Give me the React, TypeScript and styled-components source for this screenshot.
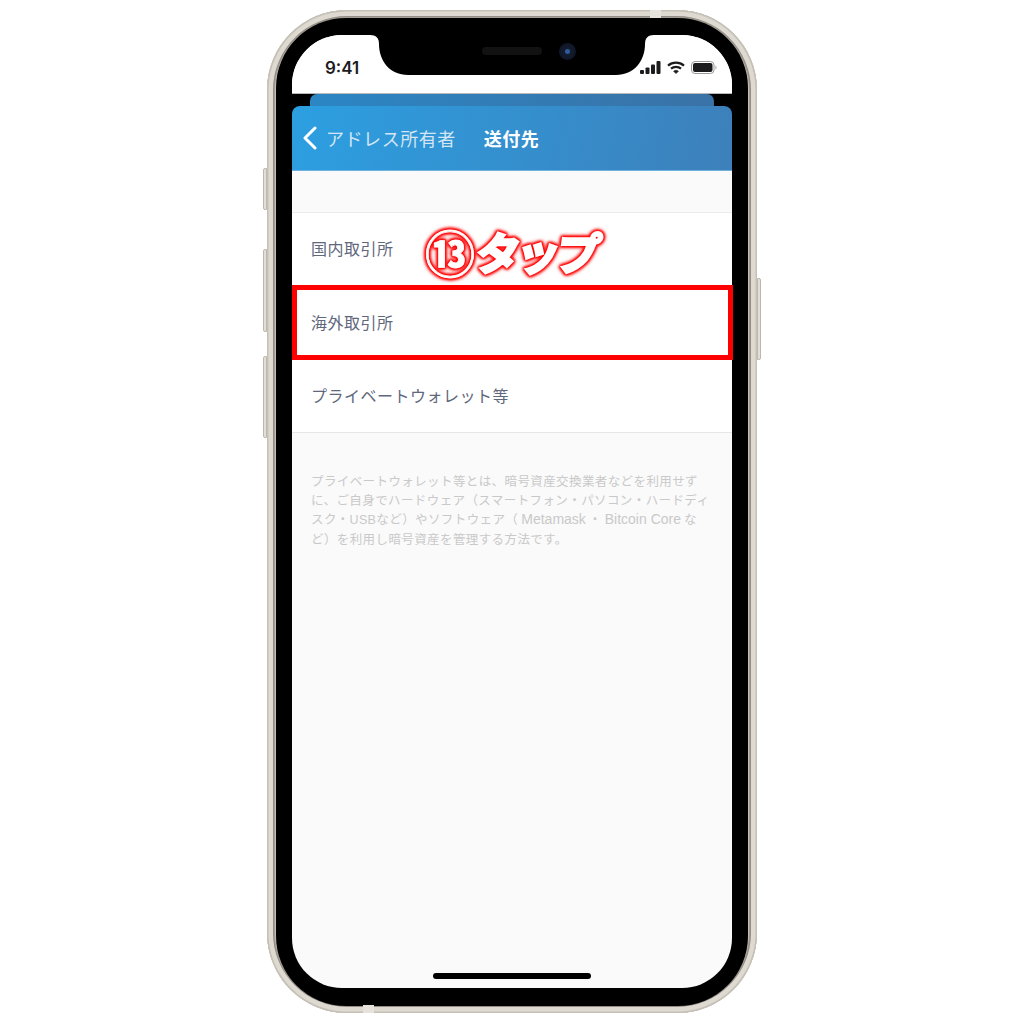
import React from "react";
import styled, { createGlobalStyle } from "styled-components";

const GlobalStyle = createGlobalStyle`
  html, body {
    margin: 0;
    padding: 0;
    background: #fff;
    font-family: "Noto Sans CJK JP", "Liberation Sans", sans-serif;
  }
`;

const Stage = styled.div`
  width: 1024px;
  height: 1024px;
  display: flex;
  justify-content: center;
  padding-top: 10px;
  box-sizing: border-box;
`;

const Phone = styled.div`
  position: relative;
  width: 490px;
  height: 1003px;
  box-sizing: border-box;
  padding: 8px 9px 7px;
  border-radius: 80px;
  background: #d9d5cc;
  box-shadow: inset 0 0 0 1.5px #c6c1b6, inset 0 0 0 6px #dedad2, inset 0 0 2px 8px #8f8a81;
`;

const Bezel = styled.div`
  height: 100%;
  box-sizing: border-box;
  padding: 17px 16px 18px;
  border-radius: 70px;
  background: #000;
`;

const Screen = styled.div`
  position: relative;
  height: 100%;
  display: flex;
  flex-direction: column;
  border-radius: 50px;
  background: #fafafa;
`;

const SideButton = styled.span<{ $side: "left" | "right"; $top: number; $height: number }>`
  position: absolute;
  ${(p) => p.$side}: -4px;
  top: ${(p) => p.$top}px;
  width: 4px;
  height: ${(p) => p.$height}px;
  background: #e3dfd8;
  border: 1px solid #bdb8ae;
  box-sizing: border-box;
  border-radius: ${(p) => (p.$side === "left" ? "2px 0 0 2px" : "0 2px 2px 0")};
`;

const Antenna = styled.span<{ $left: number; $bottom?: boolean }>`
  position: absolute;
  left: ${(p) => p.$left}px;
  ${(p) => (p.$bottom ? "bottom: 0" : "top: 0")};
  width: 11px;
  height: 8px;
  background: #e6e3dd;
`;

const NotchShape = styled.svg`
  position: absolute;
  top: 0;
  left: 78px;
  width: 284px;
  height: 40px;
  z-index: 3;
`;

const Speaker = styled.span`
  position: absolute;
  top: 12px;
  left: 190px;
  width: 60px;
  height: 8px;
  border-radius: 4px;
  background: #121212;
  z-index: 4;
`;

const Camera = styled.span`
  position: absolute;
  top: 8px;
  left: 267px;
  width: 17px;
  height: 17px;
  border-radius: 50%;
  background: radial-gradient(circle, #2e5a9a 0 2px, #141c30 3px, #0c1220 100%);
  z-index: 4;
`;

const StatusBar = styled.div`
  height: 59px;
  flex: none;
  display: flex;
  align-items: flex-end;
  justify-content: space-between;
  padding: 0 14px 19px 33px;
  box-sizing: border-box;
  background: #fff;
  border-radius: 50px 50px 0 0;
  border-bottom: 1px solid #b9b9b9;
`;

const Time = styled.span`
  margin-bottom: -2px;
  font-family: "Inter", "Liberation Sans", sans-serif;
  font-size: 17px;
  line-height: 16px;
  font-weight: 600;
  color: #1c1c1e;
`;

const StatusIcons = styled.div`
  display: flex;
  align-items: center;
  gap: 6px;
  height: 14px;
`;

const HeaderStack = styled.div`
  flex: none;
  height: 77px;
  background: #000;
  display: flex;
  flex-direction: column;
  align-items: center;
`;

const BackCard = styled.div`
  width: 404px;
  height: 12px;
  flex: none;
  margin-left: -1px;
  border-radius: 7px 7px 0 0;
  background: linear-gradient(100deg, #2b86c4, #3a72a6);
`;

const Header = styled.div`
  width: 100%;
  height: 65px;
  flex: none;
  display: flex;
  align-items: center;
  border-radius: 8px 8px 0 0;
  background: linear-gradient(100deg, #2c9fe1, #3d80bb);
  color: #fff;
  border-bottom: 1px solid #6fb2de;
  box-sizing: border-box;
`;

const BackIcon = styled.svg`
  width: 16px;
  height: 24px;
  margin-left: 10px;
`;

const BackLabel = styled.span`
  margin-left: 8px;
  font-size: 18px;
  letter-spacing: 0.55px;
  color: #d4e6f3;
`;

const Title = styled.span`
  margin-left: 28px;
  font-size: 18px;
  font-weight: 700;
  letter-spacing: 0.4px;
`;

const Rows = styled.div`
  margin-top: 41px;
  flex: none;
  background: #fff;
  border-top: 1px solid #ececec;
  border-bottom: 1px solid #e6e6e6;
`;

const Row = styled.div<{ $height: number }>`
  position: relative;
  height: ${(p) => p.$height}px;
  box-sizing: border-box;
  display: flex;
  align-items: center;
  padding: 0 0 2px 19px;
  font-size: 16px;
  letter-spacing: 0.5px;
  color: #5f687d;
`;

const Highlight = styled.span`
  position: absolute;
  inset: 0 -1px 0 0;
  border: 5px solid #ff0000;
`;

const Annotation = styled.div`
  position: absolute;
  top: 187px;
  left: 133px;
  display: flex;
  align-items: center;
  font-weight: 700;
  color: #fff;
  filter: drop-shadow(0 0 1px #ff0000) drop-shadow(0 0 1px #ff0000) drop-shadow(0 0 1.5px #ff1010)
    drop-shadow(0 0 1px #ff4040);
`;

const AnnotationNumber = styled.span`
  font-size: 50px;
  line-height: 58px;
  -webkit-text-stroke: 0.8px #fff;
`;

const AnnotationText = styled.span`
  margin-left: 2px;
  font-size: 44px;
  line-height: 58px;
  letter-spacing: -4px;
  -webkit-text-stroke: 3px #fff;
  transform: skewX(-8deg);
`;

const Note = styled.div`
  margin: 40px 0 0;
  padding: 0 22px 0 19px;
  font-family: "Liberation Sans", "Noto Sans CJK JP", sans-serif;
  font-size: 12.5px;
  letter-spacing: 0.4px;
  color: #c9c9c9;
`;

const NoteLine = styled.div`
  height: 19.2px;
  line-height: 19.2px;
  white-space: nowrap;
`;

const NoteLatin = styled.span`
  margin: 0 3px;
  font-size: 14px;
  line-height: 1;
  letter-spacing: 0;
`;

const HomeIndicator = styled.span`
  position: absolute;
  bottom: 9px;
  left: 141px;
  width: 158px;
  height: 6px;
  border-radius: 3px;
  background: #000;
`;

export default function App() {
  return (
    <Stage>
      <GlobalStyle />
      <Phone>
        <SideButton $side="left" $top={158} $height={42} />
        <SideButton $side="left" $top={239} $height={83} />
        <SideButton $side="left" $top={346} $height={82} />
        <SideButton $side="right" $top={268} $height={82} />
        <Antenna $left={383} />
        <Antenna $left={96} $bottom />
        <Bezel>
          <Screen>
            <NotchShape viewBox="0 0 284 40">
              <path d="M0 0C6 0 9 3 9 9C9 26 20 40 38 40H246C264 40 275 26 275 9C275 3 278 0 284 0Z" fill="#000" />
            </NotchShape>
            <Speaker />
            <Camera />
            <StatusBar>
              <Time>9:41</Time>
              <StatusIcons>
                <svg width="21" height="13" viewBox="0 0 21 13" fill="#1c1c1e">
                  <rect x="0" y="9" width="4" height="4" rx="1" />
                  <rect x="5.5" y="6.5" width="4" height="6.5" rx="1" />
                  <rect x="11" y="3.5" width="4" height="9.5" rx="1" />
                  <rect x="16.5" y="0" width="4" height="13" rx="1" />
                </svg>
                <svg width="18" height="13" viewBox="0 0 18 13" fill="none" stroke="#1c1c1e" strokeWidth="2.2">
                  <path d="M1 4.6C5.5 .6 12.5 .6 17 4.6" />
                  <path d="M4 7.6C6.8 5.2 11.2 5.2 14 7.6" />
                  <path d="M9 12.6L6.6 10.2C8 9 10 9 11.4 10.2Z" fill="#1c1c1e" strokeWidth="0.6" />
                </svg>
                <svg width="27" height="13" viewBox="0 0 27 13">
                  <rect x="0.5" y="0.5" width="22.5" height="12" rx="3.5" fill="none" stroke="#9a9a9a" />
                  <rect x="2" y="2" width="19.5" height="9" rx="2" fill="#1c1c1e" />
                  <path d="M24.5 4.5C25.8 5 25.8 8 24.5 8.5Z" fill="#9a9a9a" />
                </svg>
              </StatusIcons>
            </StatusBar>
            <HeaderStack>
              <BackCard />
              <Header>
                <BackIcon viewBox="0 0 16 24" fill="none" stroke="#fff" strokeWidth="3" strokeLinecap="round" strokeLinejoin="round">
                  <path d="M13 2L3 12L13 22" />
                </BackIcon>
                <BackLabel>アドレス所有者</BackLabel>
                <Title>送付先</Title>
              </Header>
            </HeaderStack>
            <Rows>
              <Row $height={72}>国内取引所</Row>
              <Row $height={75}>
                海外取引所
                <Highlight />
              </Row>
              <Row $height={72}>プライベートウォレット等</Row>
            </Rows>
            <Note>
              <NoteLine>プライベートウォレット等とは、暗号資産交換業者などを利用せず</NoteLine>
              <NoteLine>に、ご自身でハードウェア（スマートフォン・パソコン・ハードディ</NoteLine>
              <NoteLine>
                スク・USBなど）やソフトウェア（<NoteLatin>Metamask</NoteLatin>・<NoteLatin>Bitcoin Core</NoteLatin>な
              </NoteLine>
              <NoteLine>ど）を利用し暗号資産を管理する方法です。</NoteLine>
            </Note>
            <Annotation>
              <AnnotationNumber>⑬</AnnotationNumber>
              <AnnotationText>タップ</AnnotationText>
            </Annotation>
            <HomeIndicator />
          </Screen>
        </Bezel>
      </Phone>
    </Stage>
  );
}
